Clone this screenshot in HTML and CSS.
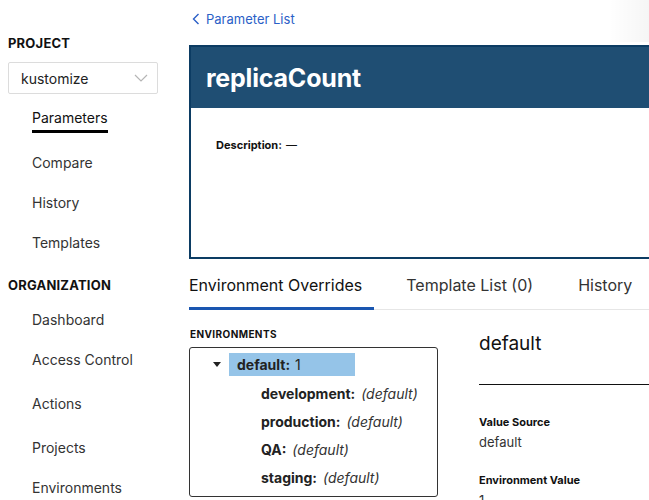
FILE: index.html
```html
<!DOCTYPE html>
<html>
<head>
<meta charset="utf-8">
<link rel="stylesheet" href="styles.css">
</head>
<body>
<div class="app">
  <aside class="sidebar">
    <div class="section-title">PROJECT</div>
    <div class="select">
      <span>kustomize</span>
      <svg class="chev" width="14" height="8" viewBox="0 0 14 8"><path d="M1 1 L7 7 L13 1" fill="none" stroke="#b5b5b5" stroke-width="1.2"/></svg>
    </div>
    <nav class="nav">
      <a class="nav-item active"><span>Parameters</span></a>
      <a class="nav-item">Compare</a>
      <a class="nav-item">History</a>
      <a class="nav-item">Templates</a>
    </nav>
    <div class="section-title org">ORGANIZATION</div>
    <nav class="nav org-nav">
      <a class="nav-item">Dashboard</a>
      <a class="nav-item tall">Access Control</a>
      <a class="nav-item tall">Actions</a>
      <a class="nav-item">Projects</a>
      <a class="nav-item">Environments</a>
    </nav>
  </aside>
  <main class="main">
    <a class="back"><svg width="8" height="12" viewBox="0 0 8 12"><path d="M6.5 1 L1.5 6 L6.5 11" fill="none" stroke="#2b5fc7" stroke-width="1.4"/></svg>Parameter List</a>
    <section class="card">
      <header class="card-head"><h1>replicaCount</h1></header>
      <div class="card-body"><b>Description:</b> <span class="dash">—</span></div>
    </section>
    <div class="tabs">
      <div class="tab active">Environment Overrides</div>
      <div class="tab">Template List (0)</div>
      <div class="tab">History</div>
    </div>
    <div class="env">
      <div class="env-left">
        <div class="env-title">ENVIRONMENTS</div>
        <div class="tree">
          <div class="root">
            <svg class="caret" width="8" height="5" viewBox="0 0 8 5"><path d="M0 0 H8 L4 5 Z" fill="#222"/></svg>
            <span class="sel"><b>default:</b> 1</span>
          </div>
          <div class="child"><b>development:</b> <i>(default)</i></div>
          <div class="child"><b>production:</b> <i>(default)</i></div>
          <div class="child"><b>QA:</b> <i>(default)</i></div>
          <div class="child"><b>staging:</b> <i>(default)</i></div>
        </div>
      </div>
      <div class="env-right">
        <h2>default</h2>
        <div class="field-label first">Value Source</div>
        <div class="field-value">default</div>
        <div class="field-label">Environment Value</div>
        <div class="field-value">1</div>
      </div>
    </div>
  </main>
  <div class="edge-shadow"></div>
</div>
</body>
</html>
```
FILE: styles.css
```css
* { box-sizing: border-box; }
html, body { margin: 0; padding: 0; }
body {
  font-family: Inter, "Liberation Sans", sans-serif;
  color: #222;
  background: #fff;
  width: 649px;
  height: 500px;
  overflow: hidden;
}
.app { display: flex; position: relative; height: 500px; overflow: hidden; }
.sidebar { width: 189px; flex: none; padding: 35px 0 0 8px; }
.section-title { font-size: 13px; line-height: 16px; font-weight: 700; color: #111; letter-spacing: 0.2px; }
.section-title.org { margin-top: 14px; }
.select {
  margin-top: 11px; width: 150px; height: 32px;
  border: 1px solid #dcdcdc; border-radius: 2px;
  display: flex; align-items: center; justify-content: space-between;
  padding: 0 9px 0 12px; font-size: 14px; color: #222;
}
.nav { display: flex; flex-direction: column; margin-top: 4px; }
.org-nav { margin-top: 7px; }
.nav-item { display: block; padding: 10px 0 10px 24px; font-size: 14px; line-height: 20px; color: #333; }
.nav-item.tall { padding-bottom: 14px; }
.nav-item.active { color: #111; }
.nav-item.active span { display: inline-block; padding-bottom: 2px; border-bottom: 3px solid #000; }

.main { flex: none; width: 460px; padding-top: 10px; }
.back { display: flex; align-items: center; gap: 6px; font-size: 13px; line-height: 18px; color: #2b5fc7; padding-left: 3px; height: 18px; }
.card { margin-top: 17px; border: 2px solid #0c3c63; border-right: none; height: 214px; display: flex; flex-direction: column; }
.card-head { background: #1f4e73; height: 61px; display: flex; align-items: center; padding-left: 15px; }
.card-head h1 { margin: 0; color: #fff; font-size: 25px; font-weight: 700; line-height: 30px; letter-spacing: -0.2px; }
.card-body { padding: 29px 0 0 25px; font-size: 11px; line-height: 16px; color: #111; }
.card-body b { font-weight: 700; }
.dash { font-size: 11px; margin-left: 1px; }

.tabs { display: flex; border-bottom: 1px solid #e6e6e6; height: 51px; align-items: flex-end; }
.tab { flex: none; font-size: 16px; line-height: 20px; color: #333; padding: 0 0 14px 0; margin-right: 45px; white-space: nowrap; }
.tab.active { color: #111; border-bottom: 3px solid #1a56b0; margin-bottom: -1px; padding-bottom: 12px; padding-right: 12px; margin-right: 32px; }

.env { display: flex; padding-top: 17px; }
.env-left { width: 249px; flex: none; }
.env-title { font-size: 10px; line-height: 14px; font-weight: 700; color: #111; letter-spacing: 0.4px; padding-left: 1px; }
.tree { margin-top: 6px; border: 1px solid #333; border-radius: 3px; height: 150px; padding: 5px 0 0 0; }
.root { display: flex; align-items: center; height: 23px; }
.caret { margin: 0 8px 0 23px; }
.sel { background: #95c4e8; height: 23px; width: 126px; display: flex; align-items: center; padding-left: 8px; font-size: 14px; color: #222; }
.sel b { margin-right: 5px; }
.child { padding-left: 71px; font-size: 14px; line-height: 20px; margin-top: 8px; color: #222; }
.child:first-of-type { margin-top: 7px; }
.child i { color: #333; margin-left: 2px; }

.env-right { margin-left: 41px; flex: 1; }
.env-right h2 { margin: 4px 0 0 0; font-size: 19px; font-weight: 400; line-height: 26px; color: #111; padding-bottom: 27px; border-bottom: 1.5px solid #111; }
.field-label { font-size: 11px; font-weight: 700; line-height: 14px; color: #111; margin-top: 23px; }
.field-label.first { margin-top: 30px; }
.field-value { font-size: 13px; line-height: 16px; color: #333; margin-top: 5px; }

.edge-shadow { position: absolute; right: 0; top: 0; width: 40px; height: 42px; background: linear-gradient(to right, rgba(0,0,0,0), rgba(0,0,0,0.04)); }
```
